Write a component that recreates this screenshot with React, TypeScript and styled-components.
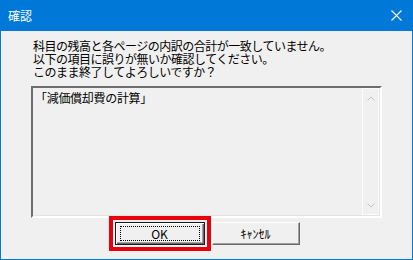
import styled, { createGlobalStyle } from 'styled-components'

const GlobalStyle = createGlobalStyle`
  html, body {
    margin: 0;
    padding: 0;
    background: #ffffff;
  }
  body {
    font-family: "Noto Sans CJK JP", "Noto Sans", sans-serif;
  }
`

const Window = styled.div`
  width: 413px;
  height: 260px;
  box-sizing: border-box;
  background: #0078d7;
  padding: 0 1px 1px 1px;
  display: flex;
  flex-direction: column;
  font-family: "Noto Sans CJK JP", "Noto Sans", sans-serif;
`

const TitleBar = styled.div`
  height: 31px;
  display: flex;
  align-items: center;
  justify-content: space-between;
  padding: 0 10px 0 7px;
  color: #ffffff;
  font-size: 12px;
  line-height: 14px;
`

const Body = styled.div`
  flex: 1;
  background: #f0f0f0;
  padding: 8px 0 0 30px;
  display: flex;
  flex-direction: column;
`

const Message = styled.div`
  font-size: 12px;
  line-height: 13px;
  letter-spacing: -0.5px;
  color: #000000;
  padding-left: 2px;
`

const ListBox = styled.div`
  margin-top: 8px;
  width: 351px;
  height: 132px;
  box-sizing: border-box;
  border-style: solid;
  border-width: 2px;
  border-color: #6d6d6d #ffffff #ffffff #6d6d6d;
  box-shadow: inset -1px -1px 0 #e3e3e3;
  background: #f0f0f0;
  display: flex;
`

const ListItems = styled.div`
  flex: 1;
  padding: 3px 0 0 2px;
  font-size: 12px;
  line-height: 14px;
  letter-spacing: -0.3px;
  color: #000000;
`

const ScrollBar = styled.div`
  width: 17px;
  margin: 0 1px 1px 0;
  box-sizing: border-box;
  border: 1px solid #fbfbfb;
  display: flex;
  flex-direction: column;
  justify-content: space-between;
  align-items: center;
  padding: 7px 0 6px;
`

const ButtonRow = styled.div`
  display: flex;
  justify-content: center;
  gap: 7px;
  margin-top: 4px;
  padding-right: 29px;
`

const Button = styled.button<{ $default?: boolean }>`
  width: ${p => (p.$default ? 90 : 88)}px;
  height: 23px;
  box-sizing: border-box;
  padding: 0;
  margin: 0;
  background: #f0f0f0;
  font-family: "Noto Sans CJK JP", "Noto Sans", sans-serif;
  font-size: 12px;
  color: #000000;
  border: 1px solid ${p => (p.$default ? '#1a1a1a' : '#f0f0f0')};
  border-color: ${p => (p.$default ? '#1a1a1a' : '#ffffff #696969 #696969 #ffffff')};
  box-shadow: ${p =>
    p.$default
      ? 'inset 1px 1px 0 #ffffff, inset -1px -1px 0 #696969, inset -2px -2px 0 #a0a0a0'
      : 'inset -1px -1px 0 #a0a0a0, inset 1px 1px 0 #f0f0f0'};
  outline: ${p => (p.$default ? '4px solid #e8000b' : 'none')};
  outline-offset: 2px;
  display: flex;
  align-items: center;
  justify-content: center;
`

const FocusRing = styled.span`
  width: 80px;
  height: 15px;
  box-sizing: border-box;
  border: 1px dotted #000000;
  display: flex;
  align-items: center;
  justify-content: center;
  line-height: 13px;
`

const Chevron = ({ down }: { down?: boolean }) => (
  <svg width="8" height="5" viewBox="0 0 8 5">
    <polyline
      points={down ? '0.5,0.5 4,4 7.5,0.5' : '0.5,4.5 4,1 7.5,4.5'}
      fill="none"
      stroke="#c3c3c3"
      strokeWidth="1"
    />
  </svg>
)

const CloseIcon = () => (
  <svg width="11" height="11" viewBox="0 0 11 11">
    <path d="M0.5 0.5 L10.5 10.5 M10.5 0.5 L0.5 10.5" stroke="#ffffff" strokeWidth="1.1" />
  </svg>
)

export default function App() {
  return (
    <>
      <GlobalStyle />
      <Window>
        <TitleBar>
          <span>確認</span>
          <CloseIcon />
        </TitleBar>
        <Body>
          <Message>
            科目の残高と各ページの内訳の合計が一致していません。
            <br />
            以下の項目に誤りが無いか確認してください。
            <br />
            このまま終了してよろしいですか？
          </Message>
          <ListBox>
            <ListItems>「減価償却費の計算」</ListItems>
            <ScrollBar>
              <Chevron />
              <Chevron down />
            </ScrollBar>
          </ListBox>
          <ButtonRow>
            <Button $default>
              <FocusRing>OK</FocusRing>
            </Button>
            <Button>ｷｬﾝｾﾙ</Button>
          </ButtonRow>
        </Body>
      </Window>
    </>
  )
}
